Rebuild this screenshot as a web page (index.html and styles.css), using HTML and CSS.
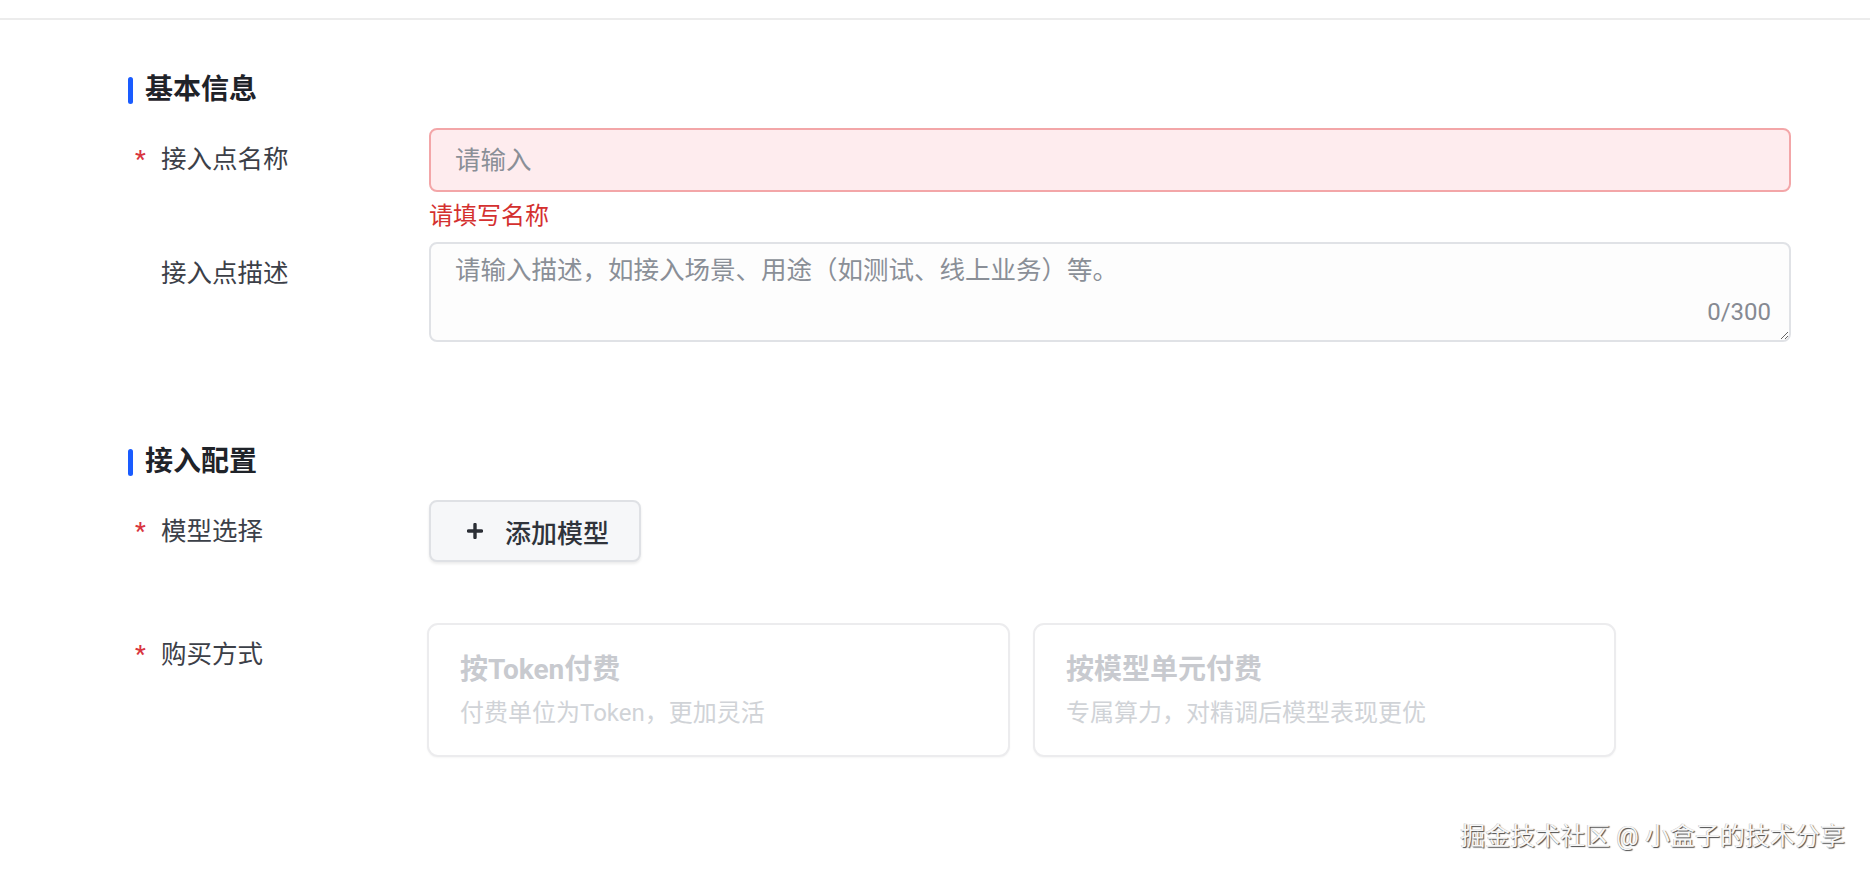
FILE: index.html
```html
<!DOCTYPE html>
<html lang="zh-CN">
<head>
<meta charset="utf-8">
<title>接入点</title>
<link rel="stylesheet" href="styles.css">
</head>
<body>
<div class="topbar"></div>
<main class="page">
  <section class="section">
    <h2 class="section-title">基本信息</h2>
    <div class="form-item item-name">
      <label class="label"><span class="req">*</span>接入点名称</label>
      <div class="control">
        <input class="input input-error" type="text" placeholder="请输入">
        <div class="error-msg">请填写名称</div>
      </div>
    </div>
    <div class="form-item">
      <label class="label"><span class="req"></span>接入点描述</label>
      <div class="control textarea-wrap">
        <textarea class="textarea" placeholder="请输入描述，如接入场景、用途（如测试、线上业务）等。"></textarea>
        <span class="counter">0/300</span>
      </div>
    </div>
  </section>

  <section class="section section-config">
    <h2 class="section-title">接入配置</h2>
    <div class="form-item">
      <label class="label"><span class="req">*</span>模型选择</label>
      <div class="control">
        <button class="btn-add" type="button">
          <svg class="plus" width="16" height="16" viewBox="0 0 16 16"><path d="M8 1.5v13M1.5 8h13" stroke="#2b2f36" stroke-width="3.4" stroke-linecap="round"/></svg>
          <span>添加模型</span>
        </button>
      </div>
    </div>
    <div class="form-item item-buy">
      <label class="label"><span class="req">*</span>购买方式</label>
      <div class="control cards">
        <div class="card">
          <div class="card-title">按Token付费</div>
          <div class="card-desc">付费单位为Token，更加灵活</div>
        </div>
        <div class="card">
          <div class="card-title">按模型单元付费</div>
          <div class="card-desc">专属算力，对精调后模型表现更优</div>
        </div>
      </div>
    </div>
  </section>
</main>
<div class="watermark">掘金技术社区 @ 小盒子的技术分享</div>
</body>
</html>
```

FILE: styles.css
```css
* { box-sizing: border-box; }

html, body {
  margin: 0;
  padding: 0;
  background: #ffffff;
  font-family: Roboto, "Noto Sans CJK SC", "Noto Sans", sans-serif;
  color: #3c4048;
  overflow: hidden;
}

body {
  width: 1870px;
  height: 876px;
  position: relative;
}

.topbar {
  height: 20px;
  border-bottom: 2px solid #ececec;
}

.page {
  padding: 56px 79px 0 128px;
}

.section-title {
  display: flex;
  align-items: center;
  height: 28px;
  margin: 0;
  font-size: 28px;
  line-height: 28px;
  font-weight: 600;
  color: #1f2329;
}

.section-title::before {
  content: "";
  display: block;
  width: 5px;
  height: 27px;
  border-radius: 3px;
  background: #1a5cff;
  margin-right: 12px;
}

.section-config {
  margin-top: 106px;
}

.form-item {
  display: flex;
}

.section-title + .form-item {
  margin-top: 24px;
}

.item-buy {
  margin-top: 60px;
}

.label {
  flex: 0 0 301px;
  padding-left: 7px;
  height: 63px;
  line-height: 63px;
  font-size: 25.5px;
  color: #3c4048;
  display: flex;
  align-items: center;
}

.req {
  display: inline-block;
  width: 26px;
  color: #d9363e;
  font-size: 24px;
  font-weight: 500;
}

.control {
  flex: 1;
  min-width: 0;
}

.input {
  display: block;
  width: 100%;
  height: 64px;
  padding: 0 24px;
  border-radius: 8px;
  font-family: inherit;
  font-size: 25.5px;
  color: #3c4048;
  outline: none;
}

.input-error {
  background: #feecee;
  border: 2px solid #f3a6a8;
}

.input::placeholder,
.textarea::placeholder {
  color: #8a8f97;
}

.error-msg {
  height: 50px;
  padding-top: 6px;
  line-height: 36px;
  font-size: 24px;
  color: #d4302f;
}

.textarea-wrap {
  position: relative;
}

.textarea {
  display: block;
  width: 100%;
  height: 100px;
  padding: 7px 24px;
  border: 2px solid #e0e2e6;
  border-radius: 8px;
  background: #fdfdfd;
  font-family: inherit;
  font-size: 25.5px;
  line-height: 38px;
  color: #3c4048;
  outline: none;
  resize: vertical;
}

.counter {
  position: absolute;
  right: 20px;
  bottom: 12px;
  font-size: 24px;
  line-height: 35px;
  color: #868a92;
}

.btn-add {
  display: flex;
  align-items: center;
  width: 212px;
  height: 62px;
  padding: 0 0 0 36px;
  background: #f6f7f9;
  border: 2px solid #dfe1e5;
  border-radius: 8px;
  box-shadow: 0 2px 3px rgba(0, 0, 0, 0.08);
  font-family: inherit;
  font-size: 26px;
  font-weight: 500;
  color: #2f333b;
  cursor: pointer;
}

.btn-add .plus {
  flex: 0 0 16px;
  margin-right: 22px;
}

.cards {
  display: flex;
  gap: 23px;
  margin-left: -2px;
}

.card {
  width: 583px;
  height: 134px;
  padding: 24px 31px 0;
  border: 2px solid #ececee;
  border-radius: 11px;
  box-shadow: 0 1px 2px rgba(0, 0, 0, 0.04);
  background: #ffffff;
}

.card-title {
  font-size: 28px;
  line-height: 42px;
  font-weight: 700;
  color: #c8cacf;
}

.card-desc {
  margin-top: 3px;
  font-size: 24px;
  line-height: 38px;
  color: #d0d3d7;
}

.watermark {
  position: absolute;
  right: 25px;
  top: 818px;
  font-size: 25px;
  line-height: 38px;
  color: #f7f7f7;
  text-shadow: 1px 1px 1px #4a4a4a, -0.5px -0.5px 0 #bdbdbd;
  white-space: nowrap;
}
```
